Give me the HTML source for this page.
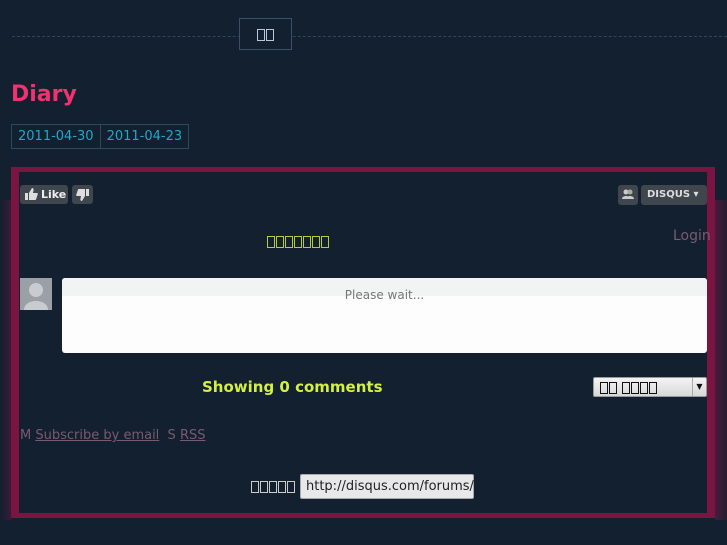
<!DOCTYPE html>
<html><head><meta charset="utf-8"><style>
body{margin:0;width:727px;height:545px;background:#12202f;position:relative;overflow:hidden;font-family:"DejaVu Sans","Liberation Sans",sans-serif}
.a{position:absolute}
.tofu{display:inline-block;width:8px;height:12px;border:1px solid currentColor;margin-right:1px;box-sizing:border-box;vertical-align:middle}
</style></head><body>
<div class="a" style="left:12px;top:36px;width:715px;border-top:1px dashed #2c4560"></div>
<div class="a" style="left:239px;top:18px;width:51px;height:30px;border:1px solid #3a5068;background:#12202f;text-align:center;line-height:30px;color:#b8c8d8"><span class="tofu"></span><span class="tofu"></span></div>
<div class="a" style="left:11px;top:82px;color:#f0326e;font-weight:bold;font-size:22px">Diary</div>
<div class="a" style="left:11px;top:124px;height:23px;border:1px solid #2a4a5e;display:flex;font-size:13px;color:#20a8c8;line-height:23px">
<span style="padding:0 6px;border-right:1px solid #2a4a5e">2011-04-30</span><span style="padding:0 6px">2011-04-23</span></div>
<div class="a" style="left:0;top:200px;width:11px;height:320px;background:linear-gradient(90deg,#12202f,#3a1a38)"></div>
<div class="a" style="left:715px;top:200px;width:12px;height:320px;background:linear-gradient(90deg,#4a1a3e,#22202f)"></div>
<div class="a" style="left:11px;top:167px;width:704px;height:351px;border:5px solid #7a1440;border-left-width:8px;border-right-width:8px;box-sizing:border-box"></div>
<div class="a" style="left:20px;top:185px;width:48px;height:19px;background:#40464e;border-radius:3px;color:#eee;font-size:11px;font-weight:bold;line-height:19px;text-indent:21px">Like</div>
<svg class="a" style="left:24px;top:187px" width="14" height="14" viewBox="0 0 14 14"><path d="M1 6h3v7H1zM5 6l3-5c1 0 2 1 1.5 2.5L9 6h4c1 0 1 1 .5 2l-1.5 4.5c-.3.5-.7.5-1 .5H5z" fill="#ddd"/></svg>
<div class="a" style="left:72px;top:185px;width:21px;height:19px;background:#40464e;border-radius:3px"></div>
<svg class="a" style="left:76px;top:188px" width="14" height="14" viewBox="0 0 14 14"><g transform="rotate(180 7 7)"><path d="M1 6h3v7H1zM5 6l3-5c1 0 2 1 1.5 2.5L9 6h4c1 0 1 1 .5 2l-1.5 4.5c-.3.5-.7.5-1 .5H5z" fill="#ddd"/></g></svg>
<div class="a" style="left:618px;top:185px;width:20px;height:20px;background:#40464e;border-radius:3px"></div>
<svg class="a" style="left:622px;top:189px" width="12" height="11" viewBox="0 0 12 11"><circle cx="4" cy="3" r="2.5" fill="#ccc"/><circle cx="8" cy="3" r="2.5" fill="#aaa"/><path d="M0 10c0-4 8-4 8 0zM4 10c0-4 8-4 8 0z" fill="#ccc"/></svg>
<div class="a" style="left:641px;top:185px;width:66px;height:20px;background:#40464e;border-radius:3px;color:#ddd;font-size:10px;font-weight:bold;line-height:20px;text-indent:6px">DISQUS ▾</div>
<div class="a" style="left:267px;top:234px;color:#b8cc30;font-size:13px"><span class="tofu"></span><span class="tofu"></span><span class="tofu"></span><span class="tofu"></span><span class="tofu"></span><span class="tofu"></span><span class="tofu"></span></div>
<div class="a" style="left:673px;top:228px;color:#7a5a70;font-size:14px">Login</div>
<div class="a" style="left:20px;top:278px;width:32px;height:32px;background:#9aa0a6"></div>
<svg class="a" style="left:20px;top:278px" width="32" height="32"><circle cx="16" cy="12" r="7" fill="#c8ccd0"/><path d="M4 32c0-12 24-12 24 0z" fill="#c8ccd0"/></svg>
<div class="a" style="left:62px;top:278px;width:645px;height:75px;background:#fdfdfd;border-radius:3px"></div>
<div class="a" style="left:62px;top:278px;width:645px;height:18px;background:#f2f4f4;border-radius:3px 3px 0 0"></div>
<div class="a" style="left:62px;top:288px;width:645px;text-align:center;color:#777;font-size:12px">Please wait...</div>
<div class="a" style="left:202px;top:378px;color:#d4f040;font-size:15px;font-weight:bold">Showing 0 comments</div>
<div class="a" style="left:593px;top:377px;width:114px;height:20px;background:linear-gradient(#f4f4f4,#d8d8d8);border:1px solid #999;box-sizing:border-box;border-radius:2px;color:#111;font-size:12px;line-height:18px;padding-left:6px"><span class="tofu"></span><span class="tofu"></span> <span class="tofu"></span><span class="tofu"></span><span class="tofu"></span><span class="tofu"></span><span style="position:absolute;right:0;top:0;width:13px;height:18px;border-left:1px solid #aaa;font-size:8px;text-align:center">▼</span></div>
<div class="a" style="left:20px;top:428px;color:#7a5a70;font-size:13px">M <u>Subscribe by email</u>&nbsp; S <u>RSS</u></div>
<div class="a" style="left:251px;top:479px;color:#ccc;font-size:12px"><span class="tofu"></span><span class="tofu"></span><span class="tofu"></span><span class="tofu"></span><span class="tofu"></span></div>
<div class="a" style="left:300px;top:474px;width:174px;height:25px;background:#e8e8ea;border:1px solid #aaa;box-sizing:border-box;border-radius:2px;color:#222;font-size:13px;line-height:23px;padding-left:5px">http://disqus.com/forums/</div>
</body></html>
